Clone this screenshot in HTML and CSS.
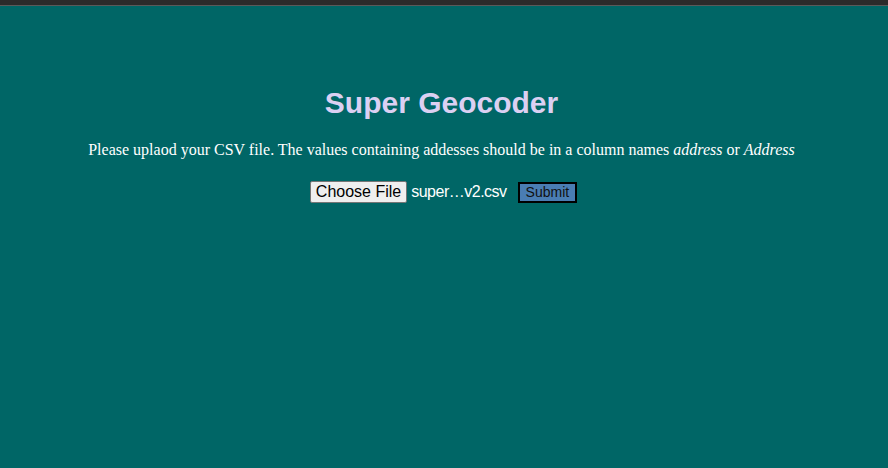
FILE: index.html
```html
<!DOCTYPE html>
<html>
<head>
<meta charset="utf-8">
<title>Super Geocoder</title>
<link rel="stylesheet" href="styles.css">
</head>
<body>
<div class="topbar"></div>
<main class="content">
  <h1 class="title">Super Geocoder</h1>
  <p class="intro">Please uplaod your CSV file. The values containing addesses should be in a column names <em>address</em> or <em>Address</em></p>
  <form class="upload">
    <span class="file">
      <button type="button" class="choose">Choose File</button>
      <span class="filename">super…v2.csv</span>
    </span>
    <button type="button" class="submit">Submit</button>
  </form>
</main>
</body>
</html>
```
FILE: styles.css
```css
html, body {
  margin: 0;
  padding: 0;
  height: 100%;
}
body {
  background: #006666;
  font-family: "Liberation Serif", "Times New Roman", serif;
}
.topbar {
  height: 5px;
  background: #2b2b2b;
  border-bottom: 1px solid #5a5a5a;
}
.content {
  text-align: center;
  padding-right: 5px;
}
.title {
  margin: 80px 0 0;
  font-family: "Liberation Sans", Arial, sans-serif;
  font-size: 30px;
  font-weight: bold;
  color: #dcd0f2;
  line-height: 34px;
}
.intro {
  margin: 21px 0 0;
  font-size: 16px;
  line-height: 18px;
  color: #ffffff;
}
.upload {
  margin: 22px 0 0;
  padding-left: 4px;
  display: flex;
  justify-content: center;
  align-items: center;
  gap: 11px;
}
.file {
  display: flex;
  align-items: center;
  gap: 4px;
}
.choose {
  font-family: "Liberation Sans", Arial, sans-serif;
  font-size: 16px;
  line-height: 18px;
  padding: 1px 5px;
  margin: 0;
  background: #efefef;
  color: #000;
  border: 1px solid #767676;
  border-radius: 2px;
}
.filename {
  font-family: "Liberation Sans", Arial, sans-serif;
  font-size: 16px;
  letter-spacing: -0.5px;
  color: #ffffff;
}
.submit {
  font-family: "Liberation Sans", Arial, sans-serif;
  font-size: 14px;
  line-height: 17px;
  padding: 0 6px;
  margin: 0;
  background: #4a7db3;
  color: #111;
  border: 2px solid #000;
  border-radius: 0;
}
```
